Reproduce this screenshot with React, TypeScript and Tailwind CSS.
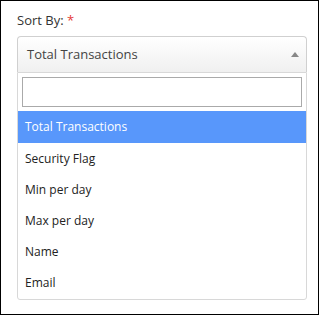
export default function App() {
  const options = ["Total Transactions", "Security Flag", "Min per day", "Max per day", "Name", "Email"];

  return (
    <div className="w-[319px] h-[315px] border border-black bg-white pl-4 pt-[9px] font-['Open_Sans',sans-serif] text-[13px] text-[#333]">
      {/* Label */}
      <div className="h-[20px] leading-[20px]">
        Sort By: <span className="text-[#e53935]">*</span>
      </div>

      <div className="mt-[6px] w-[290px]">
        {/* Select header */}
        <div className="h-[36px] flex items-center justify-between pl-[9px] pr-[6px] rounded-t-[4px] border border-b-0 border-[#d0d0d0] bg-gradient-to-b from-white to-[#f0f0f0] text-[#444]">
          <span>Total Transactions</span>
          <svg width="8" height="5" viewBox="0 0 8 5" className="mr-[1px]">
            <path d="M0 5 L4 0 L8 5 Z" fill="#888" />
          </svg>
        </div>

        {/* Dropdown */}
        <div className="border border-[#d8d8d8] rounded-b-[3px] bg-white">
          <div className="px-1 pt-[4px] pb-[4px]">
            <input className="block w-full h-[30px] border border-[#aaa] outline-none px-1" />
          </div>
          <ul className="text-[12px]">
            {options.map((o, i) => (
              <li
                key={o}
                className={
                  i === 0
                    ? "h-[32px] flex items-center pl-[7px] bg-[#5897fb] text-white"
                    : "h-[31.2px] flex items-center pl-[7px] text-[#222]"
                }
              >
                {o}
              </li>
            ))}
          </ul>
        </div>
      </div>
    </div>
  );
}
